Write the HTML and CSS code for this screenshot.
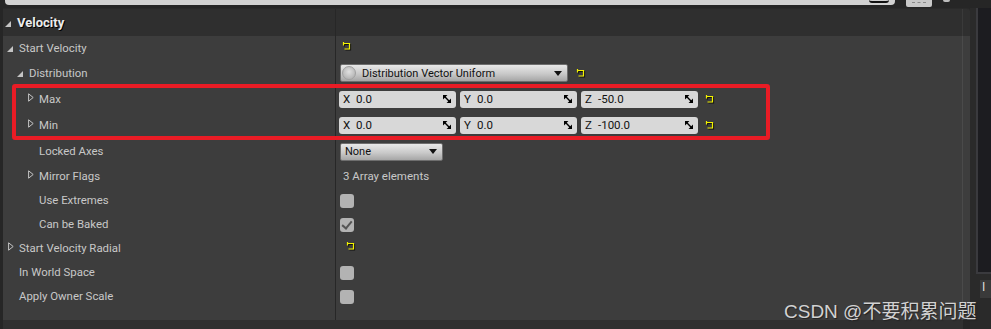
FILE: index.html
```html
<!DOCTYPE html>
<html lang="en">
<head>
    <meta charset="UTF-8" />
    <title>Details - Velocity</title>
    <link rel="stylesheet" href="styles.css">
</head>
<body>
<svg class="defs" width="0" height="0">
    <defs>
        <symbol id="reset" viewBox="0 0 10 9">
            <path d="M2.5 2.5H8.5V8H3.5M2.5 1V4.5" fill="none" stroke="#111" stroke-width="1.2"/>
            <path d="M1.5 1.5H7.5V7H2.5M1.5 0V3.5" fill="none" stroke="#f2f200" stroke-width="1.2"/>
        </symbol>
        <symbol id="drag" viewBox="0 0 9 9">
            <polygon points="0,0 5,0 0,5" fill="#000"/>
            <polygon points="9,4 9,9 4,9" fill="#000"/>
            <path d="M1.5 1.5L7.5 7.5" stroke="#000" stroke-width="1.6"/>
        </symbol>
        <symbol id="tri-open" viewBox="0 0 6 6">
            <polygon points="6,0 6,6 0,6" fill="#c4c4c4"/>
        </symbol>
        <symbol id="tri-closed" viewBox="0 0 6 9">
            <polygon points="0.6,0.8 5.2,4.5 0.6,8.2" fill="none" stroke="#c4c4c4" stroke-width="1"/>
        </symbol>
    </defs>
</svg>

<div class="topbar">
    <div class="search"><span class="search-glass"></span></div>
    <div class="view-btn"><span></span></div>
    <div class="dot"></div>
</div>

<div class="main">
    <div class="panel">
        <div class="panel-header">
            <div class="name head-name"><span class="tri"><svg class="open"><use href="#tri-open"/></svg></span>Velocity</div>
            <div class="value"></div>
            <div class="track"></div>
        </div>

        <div class="panel-body">
            <div class="rows">
                <div class="row">
                    <div class="name lvl0"><span class="tri"><svg class="open"><use href="#tri-open"/></svg></span>Start Velocity</div>
                    <div class="value"><svg class="reset pad"><use href="#reset"/></svg></div>
                </div>
                <div class="row tall">
                    <div class="name lvl1"><span class="tri"><svg class="open"><use href="#tri-open"/></svg></span>Distribution</div>
                    <div class="value">
                        <div class="combo wide">
                            <span class="orb"></span>
                            <span class="combo-text">Distribution Vector Uniform</span>
                            <span class="arrow"></span>
                        </div>
                        <svg class="reset"><use href="#reset"/></svg>
                    </div>
                </div>
                <div class="row tall">
                    <div class="name lvl2"><span class="tri"><svg class="closed"><use href="#tri-closed"/></svg></span>Max</div>
                    <div class="value vec">
                        <div class="num"><span class="axis">X</span><span class="val">0.0</span><svg class="drag"><use href="#drag"/></svg></div>
                        <div class="num"><span class="axis">Y</span><span class="val">0.0</span><svg class="drag"><use href="#drag"/></svg></div>
                        <div class="num"><span class="axis">Z</span><span class="val">-50.0</span><svg class="drag"><use href="#drag"/></svg></div>
                        <svg class="reset"><use href="#reset"/></svg>
                    </div>
                </div>
                <div class="row tall">
                    <div class="name lvl2"><span class="tri"><svg class="closed"><use href="#tri-closed"/></svg></span>Min</div>
                    <div class="value vec">
                        <div class="num"><span class="axis">X</span><span class="val">0.0</span><svg class="drag"><use href="#drag"/></svg></div>
                        <div class="num"><span class="axis">Y</span><span class="val">0.0</span><svg class="drag"><use href="#drag"/></svg></div>
                        <div class="num"><span class="axis">Z</span><span class="val">-100.0</span><svg class="drag"><use href="#drag"/></svg></div>
                        <svg class="reset"><use href="#reset"/></svg>
                    </div>
                </div>
                <div class="row tall">
                    <div class="name lvl2"><span class="tri"></span>Locked Axes</div>
                    <div class="value">
                        <div class="combo small">
                            <span class="combo-text">None</span>
                            <span class="arrow"></span>
                        </div>
                    </div>
                </div>
                <div class="row">
                    <div class="name lvl2"><span class="tri"><svg class="closed"><use href="#tri-closed"/></svg></span>Mirror Flags</div>
                    <div class="value"><span class="plain">3 Array elements</span></div>
                </div>
                <div class="row">
                    <div class="name lvl2"><span class="tri"></span>Use Extremes</div>
                    <div class="value"><span class="check"></span></div>
                </div>
                <div class="row">
                    <div class="name lvl2"><span class="tri"></span>Can be Baked</div>
                    <div class="value"><span class="check on"></span></div>
                </div>
                <div class="row">
                    <div class="name lvl0"><span class="tri"><svg class="closed"><use href="#tri-closed"/></svg></span>Start Velocity Radial</div>
                    <div class="value"><svg class="reset pad2"><use href="#reset"/></svg></div>
                </div>
                <div class="row">
                    <div class="name lvl0"><span class="tri"></span>In World Space</div>
                    <div class="value"><span class="check"></span></div>
                </div>
                <div class="row">
                    <div class="name lvl0"><span class="tri"></span>Apply Owner Scale</div>
                    <div class="value"><span class="check"></span></div>
                </div>
                <div class="row filler">
                    <div class="name"></div>
                    <div class="value"></div>
                </div>
            </div>
            <div class="track"></div>
        </div>
        <div class="panel-footer"></div>

        <div class="highlight"></div>
    </div>

    <div class="side">
        <div class="side-box"></div>
        <div class="side-tab">I</div>
    </div>
</div>

<div class="watermark">CSDN @不要积累问题</div>
</body>
</html>
```

FILE: styles.css
```css
* {
    box-sizing: border-box;
    margin: 0;
    padding: 0;
}
body {
    width: 991px;
    height: 329px;
    overflow: hidden;
    background: #262626;
    font-family: Roboto, "Noto Sans", sans-serif;
    font-size: 11.4px;
    color: #c8c8c8;
    position: relative;
}
.defs {
    position: absolute;
}

/* top strip: search box and view button */
.topbar {
    height: 8px;
    display: flex;
    align-items: flex-start;
}
.search {
    margin-left: 5px;
    width: 890px;
    height: 5px;
    background: #d2d2d2;
    border-radius: 0 0 4px 4px;
    position: relative;
}
.search-glass {
    position: absolute;
    right: 6px;
    top: 0;
    width: 20px;
    height: 3px;
    border-bottom: 2px solid #111;
    border-radius: 0 0 6px 6px;
}
.view-btn {
    margin-left: 11px;
    width: 26px;
    height: 7px;
    background: #c9c9c9;
    border-radius: 0 0 2px 2px;
    display: flex;
    justify-content: center;
}
.view-btn span {
    margin-top: 2px;
    width: 14px;
    height: 1px;
    border-top: 1px dashed #8a8a8a;
}
.dot {
    margin-left: 11px;
    width: 7px;
    height: 2px;
    background: #bdbdbd;
    border-radius: 0 0 4px 4px;
}

.main {
    display: flex;
    height: 321px;
}
.panel {
    margin-left: 3px;
    width: 967px;
    display: flex;
    flex-direction: column;
    position: relative;
}
.panel-header {
    height: 28px;
    display: flex;
    background: #2f2f2f;
    border-top: 1px solid #2a2a2a;
    border-radius: 0 3px 0 0;
}
.panel-body {
    display: flex;
    background: #3d3d3d;
}
.rows {
    flex: 1;
}
.track {
    width: 8px;
    border-left: 1px solid #4a4a4a;
}
.panel-header .track {
    border-left-color: #3a3a3a;
}
.panel-footer {
    flex: 1;
    background: #303030;
    margin-right: 7px;
}

.row {
    display: flex;
    height: 24px;
}
.row.tall {
    height: 26px;
}
.row.filler {
    height: 12px;
}
.name {
    width: 333px;
    flex: none;
    display: flex;
    align-items: center;
    border-right: 1px solid #272727;
    white-space: nowrap;
}
.value {
    flex: 1;
    display: flex;
    align-items: center;
    padding-left: 3px;
}
.head-name {
    padding-left: 2px;
    font-size: 13px;
    font-weight: bold;
    color: #ececec;
    text-shadow: 1px 1px 0 #000;
}
.lvl0 { padding-left: 4px; }
.lvl1 { padding-left: 14px; }
.lvl2 { padding-left: 24px; }

.tri {
    width: 12px;
    height: 10px;
    flex: none;
    position: relative;
}
.tri svg {
    position: absolute;
}
.tri .open {
    left: 0;
    top: 3px;
    width: 6px;
    height: 6px;
}
.tri .closed {
    left: 1px;
    top: -1px;
    width: 6px;
    height: 9px;
}

.reset {
    width: 10px;
    height: 9px;
    flex: none;
    margin-left: 8px;
}
.reset.pad {
    margin-left: 3px;
    margin-top: -3px;
}
.reset.pad2 {
    margin-left: 7px;
    margin-top: -3px;
}
.vec .reset {
    margin-left: 3px;
}

.combo {
    height: 18px;
    display: flex;
    align-items: center;
    background: linear-gradient(#e8e8e8, #c9c9c9 55%, #a6a6a6);
    border: 1px solid #6e6e6e;
    border-radius: 2px;
    color: #111;
    font-size: 11px;
    padding-right: 5px;
}
.combo.wide {
    width: 228px;
    margin-left: 1px;
}
.combo.small {
    width: 103px;
    padding-left: 4px;
    margin: 1px 0 0 1px;
}
.combo-text {
    flex: 1;
}
.orb {
    width: 14px;
    height: 14px;
    margin: 0 6px 0 1px;
    border-radius: 50%;
    background: radial-gradient(circle at 50% 40%, #e0e0e0, #b8b8b8 70%);
    border: 1px solid #a0a0a0;
}
.arrow {
    width: 0;
    height: 0;
    border-left: 4px solid transparent;
    border-right: 4px solid transparent;
    border-top: 5px solid #111;
}

.vec {
    padding-left: 3px;
    gap: 4px;
}
.num {
    width: 117px;
    height: 17px;
    display: flex;
    align-items: center;
    background: #d8d8d8;
    border-radius: 3px;
    color: #111;
    font-size: 11.5px;
    padding: 0 5px 0 4px;
}
.axis {
    width: 13px;
}
.val {
    flex: 1;
}
.drag {
    width: 8px;
    height: 8px;
}

.plain {
    padding-left: 4px;
    font-size: 11.5px;
}
.check {
    width: 14px;
    height: 14px;
    margin: 1px 0 0 1px;
    border-radius: 3px;
    background: #b3b3b3;
    position: relative;
}
.check.on::after {
    content: "";
    position: absolute;
    left: 4px;
    top: 1px;
    width: 4px;
    height: 8px;
    border-right: 2px solid #555;
    border-bottom: 2px solid #555;
    transform: rotate(40deg);
}

/* red marker round the Max / Min rows */
.highlight {
    position: absolute;
    left: 9px;
    top: 76px;
    width: 758px;
    height: 56px;
    border: 4px solid #e91c25;
    border-radius: 3px;
}

.side {
    width: 21px;
    position: relative;
    background: #2a2a2a;
}
.side-box {
    margin-left: 6px;
    height: 266px;
    background: #1c1c20;
    border-left: 2px solid #3a3a3e;
    border-bottom: 2px solid #3a3a3e;
}
.side-tab {
    margin: 6px 0 0 10px;
    height: 18px;
    background: #3a3a3a;
    color: #ddd;
    font-size: 12px;
    padding-left: 2px;
}

.watermark {
    position: absolute;
    left: 784px;
    top: 296px;
    font-family: "Liberation Sans", "Noto Sans CJK SC", sans-serif;
    font-size: 19px;
    color: #d2d2d2;
    text-shadow: 1px 1px 1px #222;
    white-space: nowrap;
}
```
